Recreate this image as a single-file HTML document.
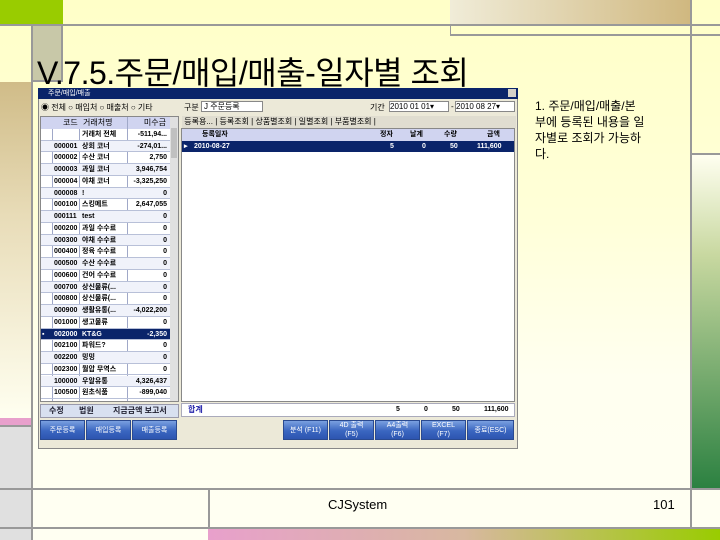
<!DOCTYPE html>
<html><head><meta charset="utf-8"><style>
*{margin:0;padding:0;box-sizing:border-box}
body{width:720px;height:540px;overflow:hidden;position:relative;background:linear-gradient(#ffffc8 0%,#ffffd8 40%,#fffff0 70%,#fffff2 100%);font-family:"Liberation Sans","Noto Sans CJK KR",sans-serif}
.a{position:absolute}
.t{font-size:8px;white-space:nowrap;color:#000;font-weight:bold}
.row{position:absolute;left:41px;width:129px;height:11.7px;border-bottom:1px solid #b8c0d8;font-size:7px;font-weight:bold;line-height:11px;white-space:nowrap}
.row span{position:absolute;top:0}
.btn{position:absolute;height:20px;background:linear-gradient(#7aa0e0,#3a66c0 55%,#2d55b0);color:#fff;font-size:7px;text-align:center;line-height:9px;border:1px solid #2a4a90;display:flex;align-items:center;justify-content:center;flex-direction:column}
</style></head><body>
<!-- decorations -->
<div class="a" style="left:0;top:0;width:63px;height:24px;background:#99cc00"></div>
<div class="a" style="left:0;top:24px;width:720px;height:2px;background:#999"></div>
<div class="a" style="left:450px;top:0;width:240px;height:24px;background:linear-gradient(90deg,#f0ecd8,#d0b880)"></div>
<div class="a" style="left:450px;top:24px;width:1px;height:10px;background:#999"></div>
<div class="a" style="left:450px;top:34px;width:270px;height:2px;background:#999"></div>
<div class="a" style="left:31px;top:26px;width:32px;height:56px;background:#c8c8a8;border-left:2px solid #999;border-right:2px solid #999;border-bottom:2px solid #999"></div>
<div class="a" style="left:0;top:82px;width:31px;height:336px;background:linear-gradient(#d0bc88,#e8dcb8 40%,#fffff0)"></div>
<div class="a" style="left:690px;top:0;width:2px;height:528px;background:#999"></div>
<div class="a" style="left:692px;top:155px;width:28px;height:335px;background:linear-gradient(#fffff0,#c8d8a0 30%,#2a8040)"></div>
<div class="a" style="left:692px;top:153px;width:28px;height:2px;background:#999"></div>
<div class="a" style="left:0;top:418px;width:31px;height:7px;background:#e8a0cc"></div>
<div class="a" style="left:0;top:425px;width:31px;height:2px;background:#999"></div>
<div class="a" style="left:0;top:427px;width:31px;height:113px;background:#e0e0e0"></div>
<div class="a" style="left:31px;top:82px;width:2px;height:458px;background:#999"></div>
<div class="a" style="left:0;top:488px;width:720px;height:2px;background:#999"></div>
<div class="a" style="left:208px;top:490px;width:2px;height:40px;background:#999"></div>
<div class="a" style="left:0;top:527px;width:720px;height:2px;background:#999"></div>
<div class="a" style="left:208px;top:529px;width:512px;height:11px;background:linear-gradient(90deg,#e8a0cc,#d8b8a0 50%,#99cc00)"></div>
<div class="a" style="left:328px;top:497px;font-size:13px">CJSystem</div>
<div class="a" style="left:653px;top:497px;font-size:13px">101</div>
<!-- title -->
<div class="a" style="left:37px;top:48px;font-size:32px;letter-spacing:-0.5px;white-space:nowrap">V.7.5.주문/매입/매출-일자별 조회</div>
<div class="a" style="left:535px;top:98px;font-size:12px;line-height:16px;width:150px">1. 주문/매입/매출/본<br>부에 등록된 내용을 일<br>자별로 조회가 가능하<br>다.</div>
<!-- window -->
<div class="a" style="left:38px;top:88px;width:480px;height:361px;background:#ece9d8;border:1px solid #888"></div>
<div class="a" style="left:38px;top:88px;width:480px;height:11px;background:#0a246a;color:#fff;font-size:7px;line-height:11px;padding-left:10px">주문/매입/매출<span style="position:absolute;right:2px;top:1px;width:8px;height:8px;background:#d4d0c8"></span></div>
<div class="a t" style="left:41px;top:102px;font-size:8px;font-weight:normal">◉ 전체 ○ 매입처 ○ 매출처 ○ 기타</div>
<div class="a t" style="left:184px;top:102px;font-weight:normal">구분</div>
<div class="a" style="left:201px;top:101px;width:62px;height:11px;background:#fff;border:1px solid #888;font-size:8px;line-height:9px;padding-left:2px">J 주문등록</div>
<div class="a t" style="left:370px;top:102px;font-weight:normal">기간</div>
<div class="a" style="left:389px;top:101px;width:60px;height:11px;background:#fff;border:1px solid #888;font-size:8px;line-height:9px">2010 01 01▾</div>
<div class="a t" style="left:451px;top:102px;font-weight:normal">-</div>
<div class="a" style="left:455px;top:101px;width:60px;height:11px;background:#fff;border:1px solid #888;font-size:8px;line-height:9px">2010 08 27▾</div>
<!-- left grid -->
<div class="a" style="left:40px;top:116px;width:139px;height:286px;background:#fff;border:1px solid #888"></div>
<div class="a" style="left:41px;top:117px;width:129px;height:12px;background:#d0d4f0;font-size:8px;line-height:12px"><span style="position:absolute;left:22px">코드</span><span style="position:absolute;left:42px">거래처명</span><span style="position:absolute;right:4px">미수금</span></div>
<div class="a" style="left:170px;top:117px;width:8px;height:284px;background:#e0e0e0"></div>
<div class="a" style="left:171px;top:128px;width:6px;height:30px;background:#c0c0c0"></div>
<div class="a" style="left:52px;top:129px;width:1px;height:272px;background:#a0a8c8"></div>
<div class="a" style="left:79px;top:129px;width:1px;height:272px;background:#a0a8c8"></div>
<div class="a" style="left:127px;top:117px;width:1px;height:284px;background:#a0a8c8"></div>
<div id="rows"></div>
<!-- tabs left -->
<div class="a" style="left:40px;top:404px;width:139px;height:14px;background:#d8e0f0;border:1px solid #99a;font-size:8px;line-height:12px;font-weight:bold;color:#223"><span style="position:absolute;left:8px">수정</span><span style="position:absolute;left:38px">법원</span><span style="position:absolute;left:72px">지금금액 보고서</span></div>
<!-- right pane -->
<div class="a" style="left:182px;top:116px;width:334px;height:12px;background:#e0ddd0;font-size:8px;line-height:12px;white-space:nowrap">&nbsp;등록용... | 등록조회 | 상품별조회 | 일별조회 | 부품별조회 |</div>
<div class="a" style="left:181px;top:128px;width:334px;height:274px;background:#fff;border:1px solid #888"></div>
<div class="a" style="left:182px;top:129px;width:332px;height:12px;background:#d0d4f0;font-size:7px;line-height:12px;font-weight:bold"><span style="position:absolute;left:20px">등록일자</span><span style="position:absolute;left:198px">정자</span><span style="position:absolute;left:228px">날계</span><span style="position:absolute;left:262px">수량</span><span style="position:absolute;left:305px">금액</span></div>
<div class="a" style="left:182px;top:141px;width:332px;height:11px;background:#0a246a;color:#fff;font-size:7px;line-height:11px;font-weight:bold"><span style="position:absolute;left:2px">▸</span><span style="position:absolute;left:12px">2010-08-27</span><span style="position:absolute;left:208px">5</span><span style="position:absolute;left:240px">0</span><span style="position:absolute;left:268px">50</span><span style="position:absolute;left:295px">111,600</span></div>
<div class="a" style="left:181px;top:403px;width:334px;height:14px;background:#fff;border:1px solid #aab;font-size:8px;line-height:12px;font-weight:bold;color:#22a"><span style="position:absolute;left:6px">합계</span></div>
<div class="a" style="left:374px;top:405px;width:140px;height:10px;font-size:7px;font-weight:bold;line-height:10px"><span style="position:absolute;left:22px">5</span><span style="position:absolute;left:50px">0</span><span style="position:absolute;left:78px">50</span><span style="position:absolute;left:110px">111,600</span></div>
<!-- buttons -->
<div class="btn" style="left:40px;top:420px;width:45px">주문등록</div>
<div class="btn" style="left:86px;top:420px;width:45px">매입등록</div>
<div class="btn" style="left:132px;top:420px;width:45px">매출등록</div>
<div class="btn" style="left:283px;top:420px;width:45px">분석 (F11)</div>
<div class="btn" style="left:329px;top:420px;width:45px">4D 출력<br>(F5)</div>
<div class="btn" style="left:375px;top:420px;width:45px">A4출력<br>(F6)</div>
<div class="btn" style="left:421px;top:420px;width:45px">EXCEL<br>(F7)</div>
<div class="btn" style="left:467px;top:420px;width:47px">종료(ESC)</div>
<script>
var d=[["","거래처 전체","-511,94..."],["000001","상회 코너","-274,01..."],["000002","수산 코너","2,750"],["000003","과일 코너","3,946,754"],["000004","야채 코너","-3,325,250"],["000008","!","0"],["000100","스킹메트","2,647,055"],["000111","test","0"],["000200","과일 수수료","0"],["000300","야채 수수료","0"],["000400","정육 수수료","0"],["000500","수산 수수료","0"],["000600","건어 수수료","0"],["000700","상신물류(...","0"],["000800","상신물류(...","0"],["000900","생활유통(...","-4,022,200"],["001000","생고물류","0"],["002000","KT&G","-2,350"],["002100","파워드?","0"],["002200","밍밍","0"],["002300","월압 무역스","0"],["100000","우알유통","4,326,437"],["100500","원초식품","-899,040"]];
var h="";d.forEach(function(r,i){var y=129+i*11.74;var s=i==17;h+='<div class="row" style="top:'+y+'px;'+(s?'background:#0a246a;color:#fff':(i%2?'background:#f0f2fa':''))+'"><span style="left:1px">'+(s?'▪':'')+'</span><span style="left:13px">'+r[0]+'</span><span style="left:41px">'+r[1]+'</span><span style="right:3px">'+r[2]+'</span></div>';});
document.getElementById("rows").outerHTML=h;
</script>
</body></html>
